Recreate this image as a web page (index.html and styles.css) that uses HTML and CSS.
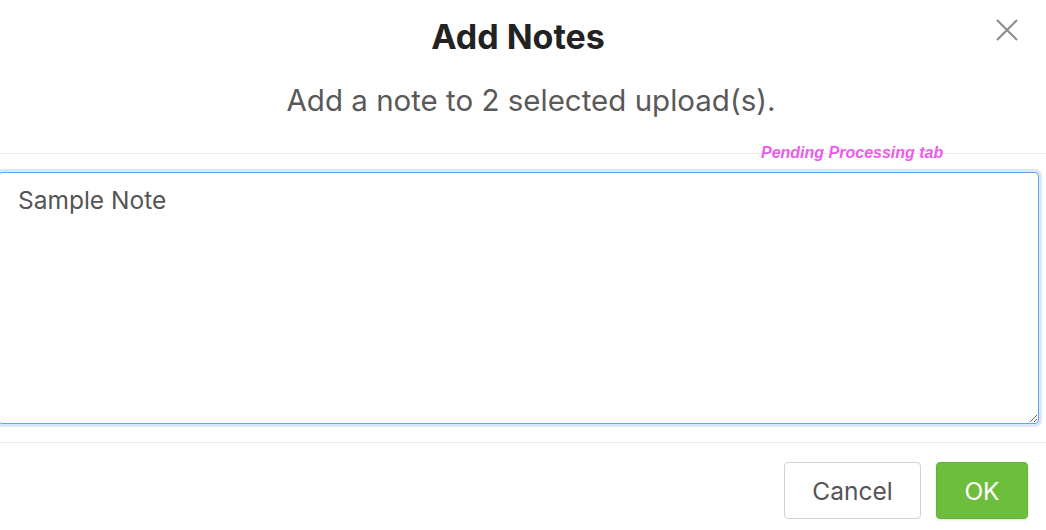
FILE: index.html
```html
<!DOCTYPE html>
<html lang="en">
<head>
  <meta charset="UTF-8" />
  <title>Add Notes</title>
  <link rel="stylesheet" href="styles.css">
</head>
<body>
  <main class="modal">
    <button class="close" aria-label="Close">
      <svg width="22" height="22" viewBox="0 0 22 22">
        <path d="M1 1 L21 21 M21 1 L1 21" stroke="#8a8a8a" stroke-width="2" fill="none"/>
      </svg>
    </button>

    <header class="modal-head">
      <h1>Add Notes</h1>
      <p class="sub">Add a note to 2 selected upload(s).</p>
    </header>

    <section class="modal-body">
      <span class="tag">Pending Processing tab</span>
      <textarea class="note">Sample Note</textarea>
    </section>

    <footer class="modal-foot">
      <button class="btn btn-cancel">Cancel</button>
      <button class="btn btn-ok">OK</button>
    </footer>
  </main>
</body>
</html>
```

FILE: styles.css
```css
body {
  margin: 0;
  font-family: Inter, "Liberation Sans", sans-serif;
  background: #fff;
  color: #555;
  overflow: hidden;
}
.modal { position: relative; height: 530px; }

.close {
  position: absolute;
  top: 19px;
  right: 28px;
  padding: 0;
  border: none;
  background: none;
  cursor: pointer;
}

.modal-head { text-align: center; padding-top: 15px; }
h1 {
  margin: 0;
  padding-right: 10px;
  font-size: 34px;
  line-height: 44px;
  font-weight: 700;
  color: #222;
}
.sub {
  margin: 24px 0 0;
  padding-left: 16px;
  font-size: 29.5px;
  line-height: 34px;
  color: #595959;
}

.modal-body {
  position: relative;
  margin-top: 36px;
  border-top: 1px solid #ebebeb;
  border-bottom: 1px solid #ebebeb;
  padding: 18px 0;
}
.tag {
  position: absolute;
  top: -10px;
  left: 761px;
  font-family: "Liberation Sans", Arial, sans-serif;
  font-size: 16px;
  font-weight: bold;
  font-style: italic;
  color: #ec5cec;
}
.note {
  display: block;
  box-sizing: border-box;
  width: 1041px;
  height: 252px;
  margin-left: -2px;
  padding: 12px 19px;
  border: 1px solid #5ea4f0;
  border-radius: 4px;
  box-shadow: 0 0 0 3px #dbe8fb;
  font-family: Inter, "Liberation Sans", sans-serif;
  font-size: 24.5px;
  color: #555;
  outline: none;
}

.modal-foot {
  display: flex;
  justify-content: flex-end;
  gap: 15px;
  padding: 19px 18px 0 0;
}
.btn {
  height: 57px;
  border-radius: 4px;
  font-family: Inter, "Liberation Sans", sans-serif;
  font-size: 24.5px;
  cursor: pointer;
}
.btn-cancel {
  width: 137px;
  background: #fff;
  border: 1px solid #d2d2d2;
  color: #555;
}
.btn-ok {
  width: 92px;
  background: #6ebe3e;
  border: 1px solid #65b236;
  color: #fff;
  box-shadow: 0 1px 3px rgba(0,0,0,.12);
}
```
